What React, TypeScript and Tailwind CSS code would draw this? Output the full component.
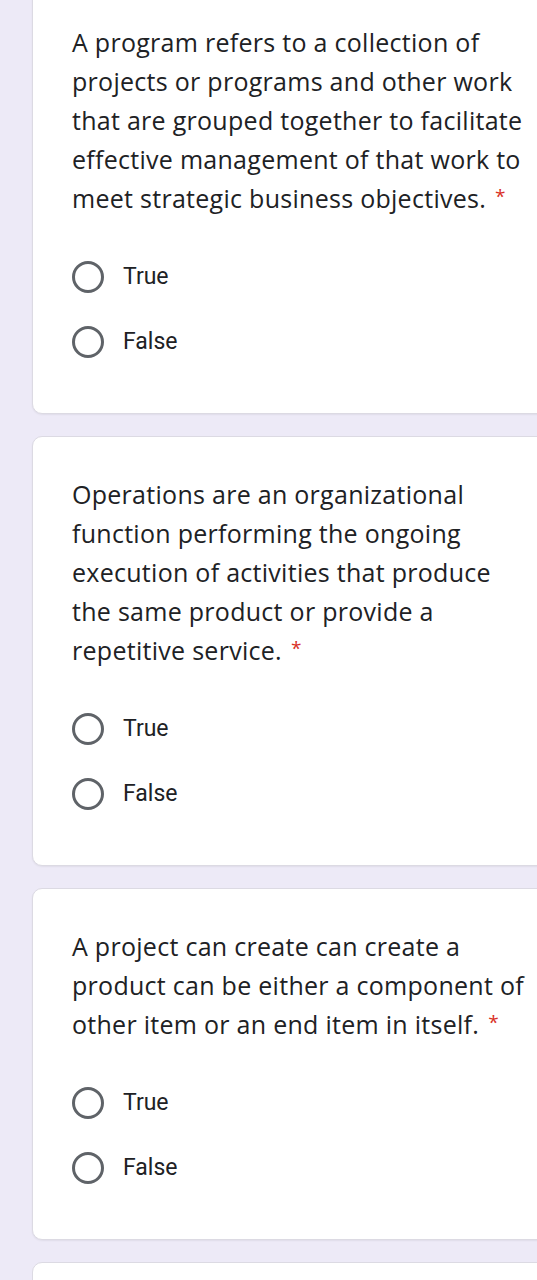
import React from 'react';

interface Question {
  lines: string[];
}

const questions: Question[] = [
  {
    lines: [
      'A program refers to a collection of',
      'projects or programs and other work',
      'that are grouped together to facilitate',
      'effective management of that work to',
      'meet strategic business objectives.',
    ],
  },
  {
    lines: [
      'Operations are an organizational',
      'function performing the ongoing',
      'execution of activities that produce',
      'the same product or provide a',
      'repetitive service.',
    ],
  },
  {
    lines: [
      'A project can create can create a',
      'product can be either a component of',
      'other item or an end item in itself.',
    ],
  },
];

function RadioOption({ label }: { label: string }) {
  return (
    <label className="flex items-center h-[48px] cursor-pointer">
      <span className="w-[32px] h-[32px] rounded-full border-[3px] border-[#5f6368] shrink-0"></span>
      <span className="ml-[19px] text-[23px] text-[#202124] font-['Roboto',sans-serif]">{label}</span>
    </label>
  );
}

function QuestionCard({ q }: { q: Question }) {
  return (
    <div className="w-[540px] bg-white rounded-[10px] border border-[#dcdae3] shadow-[0_1px_2px_rgba(0,0,0,0.06)] pl-[39px] pt-[38px] pb-[47px]">
      <div className="text-[25px] leading-[39px] text-[#202124] font-['Open_Sans',sans-serif] tracking-[0.28px]">
        {q.lines.map((line, i) => (
          <div key={i} className="whitespace-nowrap">
            {line}
            {i === q.lines.length - 1 && (
              <span className="text-[#d93025] text-[19px] ml-[9px] relative -top-[5px]">*</span>
            )}
          </div>
        ))}
      </div>
      <div className="mt-[32px] flex flex-col gap-[17px]">
        <RadioOption label="True" />
        <RadioOption label="False" />
      </div>
    </div>
  );
}

export default function App() {
  return (
    <div className="min-h-screen bg-[#edeaf7] overflow-hidden pl-[32px]">
      <div className="-mt-[16px] flex flex-col gap-[22px]">
        {questions.map((q, i) => (
          <QuestionCard key={i} q={q} />
        ))}
        <div className="w-[540px] h-[200px] bg-white rounded-[10px] border border-[#dcdae3]"></div>
      </div>
    </div>
  );
}
